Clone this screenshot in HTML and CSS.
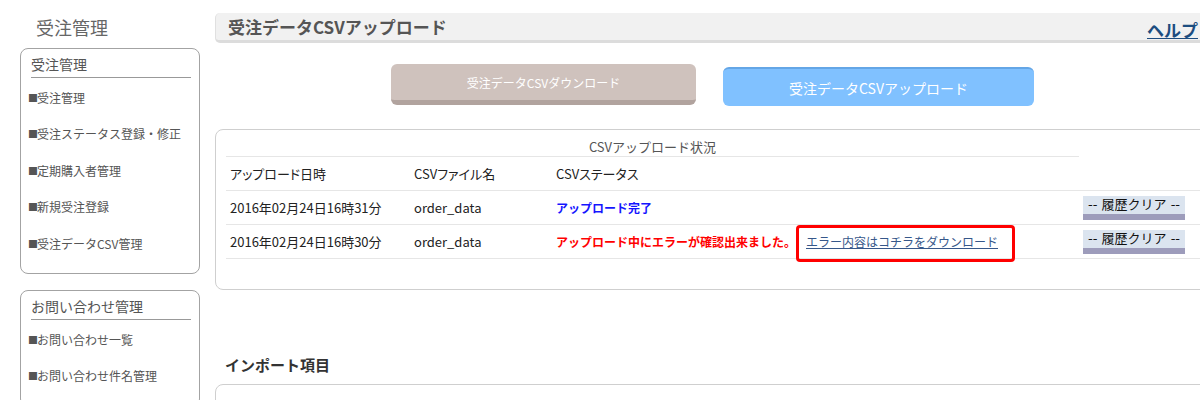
FILE: index.html
```html
<!DOCTYPE html>
<html lang="ja">
<head>
<meta charset="utf-8">
<title>受注データCSVアップロード</title>
<link rel="stylesheet" href="styles.css">
</head>
<body>
<div class="page">
  <aside class="sidebar">
    <h1 class="side-title">受注管理</h1>
    <div class="side-box">
      <h2 class="side-head">受注管理</h2>
      <ul class="side-list">
        <li><span class="sq">■</span>受注管理</li>
        <li><span class="sq">■</span>受注ステータス登録・修正</li>
        <li><span class="sq">■</span>定期購入者管理</li>
        <li><span class="sq">■</span>新規受注登録</li>
        <li><span class="sq">■</span>受注データCSV管理</li>
      </ul>
    </div>
    <div class="side-box">
      <h2 class="side-head">お問い合わせ管理</h2>
      <ul class="side-list">
        <li><span class="sq">■</span>お問い合わせ一覧</li>
        <li><span class="sq">■</span>お問い合わせ件名管理</li>
      </ul>
    </div>
  </aside>
  <main class="main">
    <div class="title-bar">
      <h1 class="title">受注データCSVアップロード</h1>
      <a class="help" href="#">ヘルプ</a>
    </div>
    <div class="tabs">
      <a class="tab tab-download" href="#">受注データCSVダウンロード</a>
      <a class="tab tab-upload" href="#">受注データCSVアップロード</a>
    </div>
    <div class="panel">
      <table class="status-table">
        <tr class="cap-row">
          <th colspan="4" class="cap">CSVアップロード状況</th>
          <th class="cap-empty"></th>
        </tr>
        <tr>
          <td class="c1">アップロード日時</td>
          <td class="c2">CSVファイル名</td>
          <td class="c3">CSVステータス</td>
          <td class="c4"></td>
          <td class="c5"></td>
        </tr>
        <tr>
          <td>2016年02月24日16時31分</td>
          <td>order_data</td>
          <td><span class="ok">アップロード完了</span></td>
          <td></td>
          <td><button class="clear-btn">-- 履歴クリア --</button></td>
        </tr>
        <tr>
          <td>2016年02月24日16時30分</td>
          <td>order_data</td>
          <td><span class="err">アップロード中にエラーが確認出来ました。</span></td>
          <td class="link-cell"><a class="err-link" href="#">エラー内容はコチラをダウンロード</a><span class="highlight"></span></td>
          <td><button class="clear-btn">-- 履歴クリア --</button></td>
        </tr>
      </table>
    </div>
    <h2 class="section-title">インポート項目</h2>
    <div class="panel panel-import"></div>
  </main>
</div>
</body>
</html>
```

FILE: styles.css
```css
html, body {
  margin: 0;
  padding: 0;
  background: #fff;
  overflow: hidden;
}
body {
  font-family: "Noto Sans CJK JP", "DejaVu Sans", sans-serif;
  color: #333;
  width: 1200px;
  height: 400px;
}
.page {
  display: flex;
  align-items: flex-start;
  width: 1240px;
}
.sidebar {
  width: 180px;
  padding-left: 20px;
  flex-shrink: 0;
}
.side-title {
  margin: 14px 0 8px 16px;
  font-size: 18px;
  line-height: 26px;
  font-weight: normal;
  color: #666;
}
.side-box {
  border: 1px solid #a3a3a3;
  border-radius: 8px;
  padding: 4px 8px 11px 7px;
  margin-bottom: 16px;
}
.side-head {
  margin: 0 0 0 3px;
  font-size: 14px;
  line-height: 22px;
  font-weight: normal;
  color: #555;
  border-bottom: 1px solid #999;
  padding-bottom: 2px;
}
.side-list {
  list-style: none;
  margin: 2px 0 0;
  padding: 0;
}
.side-list li {
  font-size: 12px;
  line-height: 36.4px;
  color: #555;
  white-space: nowrap;
}
.sq {
  display: inline-block;
  font-size: 10px;
  width: 9px;
  color: #555;
  vertical-align: 1px;
}
.main {
  margin-left: 15px;
  width: 1000px;
  flex-shrink: 0;
}
.title-bar {
  margin-top: 13px;
  height: 27px;
  background: #f1f1f1;
  border-left: 1px solid #e0e0e0;
  border-bottom: 3px solid #dcdcdc;
  border-radius: 5px 0 0 5px;
  display: flex;
  align-items: center;
  justify-content: space-between;
  padding: 0 17px 0 12px;
}
.title {
  margin: 0;
  font-size: 17px;
  font-weight: bold;
  color: #555;
  line-height: 27px;
}
.help {
  font-size: 17px;
  font-weight: bold;
  color: #1d4d80;
  text-decoration: underline;
  line-height: 27px;
  position: relative;
  top: 3px;
}
.tabs {
  display: flex;
  align-items: flex-start;
  gap: 27px;
  margin: 21px 0 0 176px;
}
.tab {
  display: flex;
  align-items: center;
  justify-content: center;
  color: #fff;
  text-decoration: none;
  border-radius: 6px;
}
.tab-download {
  width: 305px;
  height: 36px;
  font-size: 12px;
  background: #cfc2bd;
  border-bottom: 5px solid #b1a39e;
}
.tab-upload {
  width: 311px;
  height: 37px;
  margin-top: 3px;
  font-size: 14px;
  background: #80c1ff;
  border-top: 2px solid #64a6e6;
}
.panel {
  margin-top: 23px;
  border: 1px solid #cfcfcf;
  border-radius: 8px;
  padding: 7px 10px 30px;
}
.status-table {
  width: 100%;
  border-collapse: collapse;
  font-size: 13px;
  font-feature-settings: "palt";
  color: #222;
}
.status-table td,
.status-table th {
  padding: 0 4px;
  text-align: left;
  white-space: nowrap;
}
.status-table td {
  height: 33px;
  border-bottom: 1px solid #e6e6e6;
  vertical-align: middle;
}
.cap-row th {
  height: 19px;
  font-weight: normal;
}
.cap {
  text-align: center !important;
  color: #555;
  border-bottom: 1px solid #e6e6e6;
  line-height: 19px;
  font-feature-settings: normal;
}
.c1 { width: 176px; }
.c2 { width: 134px; }
.c3 { width: 242px; }
.c4 { width: 269px; }
.ok {
  color: #1515ff;
  font-weight: bold;
  font-size: 12px;
  font-feature-settings: normal;
}
.err {
  color: #ff0000;
  font-weight: bold;
  font-size: 12px;
  font-feature-settings: normal;
}
.link-cell {
  position: relative;
}
.err-link {
  color: #36578a;
  text-decoration: underline;
  font-size: 12px;
  font-feature-settings: normal;
}
.highlight {
  position: absolute;
  left: -6px;
  top: 0;
  width: 213px;
  height: 31px;
  border: 3px solid #ff0000;
  border-radius: 4px;
}
.clear-btn {
  display: block;
  width: 102px;
  height: 24px;
  padding: 0;
  font-family: "DejaVu Sans", "Noto Sans CJK JP", sans-serif;
  font-size: 13px;
  color: #111;
  background: #dbe4ef;
  border: none;
  border-bottom: 6px solid #9d9cbb;
  line-height: 18px;
  text-align: center;
}
.section-title {
  margin: 64px 0 0 10px;
  font-size: 15px;
  font-weight: bold;
  color: #333;
  line-height: 22px;
}
.panel-import {
  margin-top: 8px;
  height: 100px;
}
```
